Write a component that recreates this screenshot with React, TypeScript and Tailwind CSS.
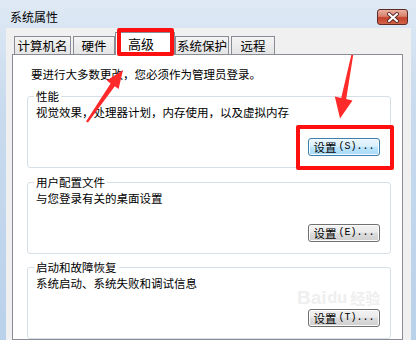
import React from "react";

const CJK = { fontFamily: '"Noto Sans CJK SC", "Noto Sans", sans-serif' };

function Btn({ k, active }: { k: string; active?: boolean }) {
  return (
    <div
      className={
        "w-[72px] h-[18px] rounded-[3px] border flex items-center justify-center text-black " +
        (active
          ? "border-[#3c7fb1] bg-[linear-gradient(#eaf6fd_0%,#d9f0fc_45%,#bee6fd_50%,#a7d9f5_100%)] shadow-[inset_0_0_0_1px_#f4fbff]"
          : "border-[#707070] bg-[linear-gradient(#f2f2f2_0%,#ebebeb_45%,#dddddd_50%,#cfcfcf_100%)] shadow-[inset_0_0_0_1px_#fcfcfc]")
      }
    >
      <span className="text-[11.5px] leading-[14px]" style={CJK}>设置</span>
      <span className="text-[10px] leading-[14px] ml-[2px]" style={{ fontFamily: '"Liberation Mono", monospace' }}>
        ({k})...
      </span>
    </div>
  );
}

function Group({ title, text, k, active, className }: { title: string; text: string; k: string; active?: boolean; className?: string }) {
  return (
    <fieldset className={"border border-[#d5dfe5] rounded-[3px] pl-[8px] pr-[10px] pb-[11px] " + (className || "")}>
      <legend className="px-[2px] -ml-[2px] text-[11.5px] leading-[14px] text-black">{title}</legend>
      <div className="mt-[2px] text-[11.5px] leading-[14px] text-black whitespace-nowrap">{text}</div>
      <div className="mt-[19px] flex justify-end">
        <Btn k={k} active={active} />
      </div>
    </fieldset>
  );
}

function Tab({ label, w }: { label: string; w: string }) {
  return (
    <div
      className={
        w +
        " h-[18px] border border-b-0 border-[#898c95] bg-[linear-gradient(#f4f4f4,#e4e4e4)] flex items-center justify-center text-[12.5px] leading-[14px] text-black"
      }
    >
      {label}
    </div>
  );
}

export default function App() {
  return (
    <div
      className="relative w-[416px] h-[340px] overflow-hidden flex flex-col bg-[linear-gradient(#dfe9f5,#c9dbee_30%,#b9d1ea)]"
      style={CJK}
    >
      {/* title bar */}
      <div className="h-[29px] flex items-start justify-between pl-[10px] pr-[8px] pt-[9px]">
        <div className="text-[12px] leading-[16px] text-black">系统属性</div>
        <div className="w-[31px] h-[16px] rounded-[3px] border border-[#5e2a24] bg-[linear-gradient(#eab0a2_0%,#d9806b_45%,#c5412c_55%,#d0654a_100%)] flex items-center justify-center">
          <svg width="14" height="11" viewBox="0 0 14 11">
            <path d="M3 2 L11 9 M11 2 L3 9" stroke="#5a2a25" strokeWidth="4" strokeLinecap="round" />
            <path d="M3 2 L11 9 M11 2 L3 9" stroke="#ffffff" strokeWidth="2.2" strokeLinecap="round" />
          </svg>
        </div>
      </div>

      {/* dialog body */}
      <div className="flex-1 ml-[6px] mr-[5px] bg-[#f0f0f0] pl-[6px] pr-[8px] pt-[4px] flex flex-col">
        <div className="h-[22px] flex items-end pl-[2px]">
          <Tab label="计算机名" w="w-[57px]" />
          <div className="w-[2px]" />
          <Tab label="硬件" w="w-[42px]" />
          <div className="relative z-10 w-[60px] h-[23px] -mb-px bg-white border border-b-0 border-[#898c95] pl-[12px] pt-[3px] text-[13px] leading-[15px] text-black">
            高级
            <div className="absolute -top-[5px] left-[1px] w-[57px] h-[28px] border-[4px] border-[#ff1010] rounded-[2px]" />
          </div>
          <Tab label="系统保护" w="w-[54px]" />
          <div className="w-[2px]" />
          <Tab label="远程" w="w-[44px]" />
        </div>

        <div className="flex-1 bg-white border border-[#898c95] pl-[14px] pr-[11px] pt-[12px]">
          <div className="pl-[4px] text-[11.5px] leading-[14px] text-black">要进行大多数更改，您必须作为管理员登录。</div>
          <Group className="mt-[8px]" title="性能" text="视觉效果，处理器计划，内存使用，以及虚拟内存" k="S" active />
          <Group className="mt-[7px]" title="用户配置文件" text="与您登录有关的桌面设置" k="E" />
          <Group className="mt-[6px]" title="启动和故障恢复" text="系统启动、系统失败和调试信息" k="T" />
        </div>
      </div>

      {/* annotation: red box around button */}
      <div className="absolute left-[296px] top-[125px] w-[98px] h-[45px] border-[4px] border-[#ff1010] rounded-[2px]" />

      {/* annotation arrows */}
      <svg className="absolute left-0 top-0 pointer-events-none" width="416" height="340">
        <polygon
          points="86,121.5 88,122.5 114.8,86.2 118.6,89 123,70 106.8,80.6 110.6,83.4"
          fill="#ff2a2a"
        />
        <polygon
          points="351.3,55 353.2,55 346.2,98.9 352.5,100.4 340,118.5 334.8,96.6 341.2,97.9"
          fill="#ff2a2a"
        />
      </svg>

      {/* watermark */}
      <div className="absolute left-[297px] top-[288px] pointer-events-none opacity-50">
        <div className="flex items-end text-[#e0e0e0] text-[19px] leading-[19px] font-bold" style={{ fontFamily: '"Liberation Sans", sans-serif' }}>
          <span>Bai</span>
          <span className="text-[16px] mx-[1px]">du</span>
          <span className="text-[15px] ml-[2px]" style={CJK}>经验</span>
        </div>
      </div>
    </div>
  );
}
